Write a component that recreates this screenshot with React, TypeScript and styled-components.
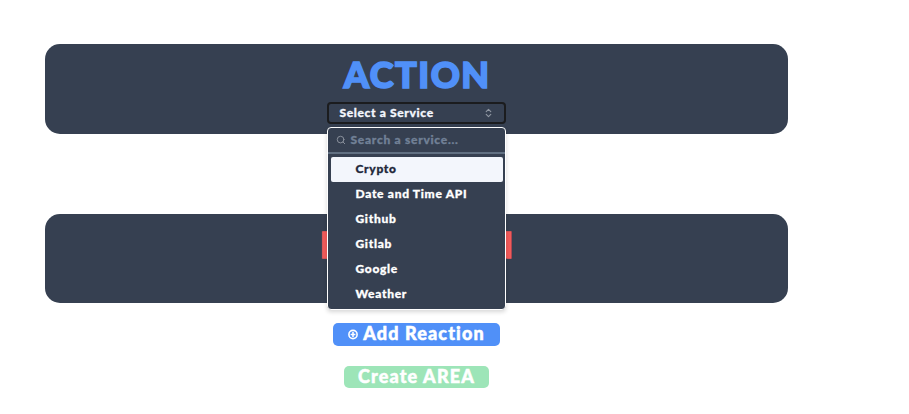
import React from "react";
import styled, { createGlobalStyle } from "styled-components";
import { Search } from "lucide-react";

const GlobalStyle = createGlobalStyle`
  * { box-sizing: border-box; }
  body {
    margin: 0;
    background: #fff;
    font-family: Lato, "Open Sans", sans-serif;
    font-weight: 900;
    overflow: hidden;
  }
`;

const Page = styled.main`
  width: 743.8px;
  height: 414px;
  margin-left: 44.6px;
  padding-top: 44px;
  display: flex;
  flex-direction: column;
  align-items: center;
`;

const Card = styled.section`
  width: 100%;
  height: 89.7px;
  flex: none;
  margin-bottom: 80px;
  padding-top: 9px;
  border-radius: 15px;
  background: #364051;
  display: flex;
  flex-direction: column;
  align-items: center;

  & + & { margin-bottom: 19.6px; }
`;

const Title = styled.h1<{ $color: string; $spacing: number }>`
  margin: 0 ${(p) => -p.$spacing}px 0 0;
  height: 48.5px;
  font-size: 36px;
  font-weight: 900;
  line-height: 42px;
  letter-spacing: ${(p) => p.$spacing}px;
  white-space: nowrap;
  color: ${(p) => p.$color};
  -webkit-text-stroke: 1.7px ${(p) => p.$color};
`;

const Picker = styled.div`
  position: relative;
  width: 179px;
`;

const Trigger = styled.button`
  width: 179px;
  height: 22.5px;
  padding: 0 12px 0 10.5px;
  border: 2px solid #1b1c1e;
  border-radius: 4px;
  background: #364051;
  color: #f3f6fc;
  font: 900 12px/18px Lato, sans-serif;
  letter-spacing: 0.65px;
  -webkit-text-stroke: 0.3px currentColor;
  display: flex;
  align-items: center;
  justify-content: space-between;

  svg { color: #9198a3; }
`;

const Menu = styled.div`
  position: absolute;
  z-index: 2;
  top: 25px;
  left: 0;
  width: 179px;
  height: 183.5px;
  border: 1.5px solid #fff;
  border-radius: 4px;
  background: #364051;
  box-shadow: 0 2px 4px rgba(0, 0, 0, 0.16);
`;

const SearchRow = styled.div`
  height: 26.5px;
  padding: 0 0 0 8px;
  border-bottom: 2px solid #617082;
  display: flex;
  align-items: center;
  gap: 4.5px;
  color: #718096;
  font-size: 12px;
  line-height: 18px;
  letter-spacing: 0.72px;
  -webkit-text-stroke: 0.3px currentColor;

  svg { color: #8f96a1; }
`;

const Options = styled.ul`
  margin: 0;
  padding: 2.5px 1.5px 2.5px 2.5px;
  list-style: none;
`;

const Option = styled.li<{ $active?: boolean }>`
  height: 25px;
  margin: 0 0.5px;
  padding-left: 24.5px;
  border-radius: 2px;
  font-size: 12px;
  line-height: 23.6px;
  letter-spacing: 0.7px;
  -webkit-text-stroke: 0.3px currentColor;
  color: ${(p) => (p.$active ? "#22283b" : "#fff")};
  background: ${(p) => (p.$active ? "#f3f6fc" : "transparent")};
`;

const Action = styled.button<{ $tone: string; $width: number }>`
  width: ${(p) => p.$width}px;
  height: 22.7px;
  flex: none;
  padding: 0 0 2.4px;
  margin-bottom: 20px;
  border: 0;
  border-radius: 5px;
  background: ${(p) => p.$tone};
  color: #fff;
  font: 900 18px/20px Lato, sans-serif;
  letter-spacing: 1.13px;
  -webkit-text-stroke: 0.5px currentColor;
  display: flex;
  align-items: center;
  justify-content: center;
  gap: 5px;

  svg { margin-top: 2px; }
`;

const PlusCircle = () => (
  <svg width="10" height="11" viewBox="0 0 10 11" fill="none" stroke="currentColor" strokeWidth="1.6">
    <circle cx="5" cy="5.5" r="4.1" />
    <path d="M5 3.1v4.8M2.6 5.5h4.8" />
  </svg>
);

const Chevrons = () => (
  <svg width="7" height="10" viewBox="0 0 7 10" fill="none" stroke="currentColor" strokeWidth="1.1" strokeLinecap="round" strokeLinejoin="round">
    <path d="M1.2 3.7 3.5 1.4l2.3 2.3M1.2 6.3l2.3 2.3 2.3-2.3" />
  </svg>
);

const services = ["Crypto", "Date and Time API", "Github", "Gitlab", "Google", "Weather"];

export default function App() {
  return (
    <>
      <GlobalStyle />
      <Page>
        <Card>
          <Title $color="#5090f8" $spacing={1.5}>ACTION</Title>
          <Picker>
            <Trigger>
              Select a Service
              <Chevrons />
            </Trigger>
            <Menu>
              <SearchRow>
                <Search size={10} strokeWidth={2.2} />
                Search a service...
              </SearchRow>
              <Options>
                {services.map((name, i) => (
                  <Option key={name} $active={i === 0}>{name}</Option>
                ))}
              </Options>
            </Menu>
          </Picker>
        </Card>
        <Card>
          <Title $color="#f25a5a" $spacing={1.6}>REACTION</Title>
        </Card>
        <Action $tone="#5090f8" $width={167}>
          <PlusCircle />
          Add Reaction
        </Action>
        <Action $tone="#9de5b8" $width={145}>Create AREA</Action>
      </Page>
    </>
  );
}
